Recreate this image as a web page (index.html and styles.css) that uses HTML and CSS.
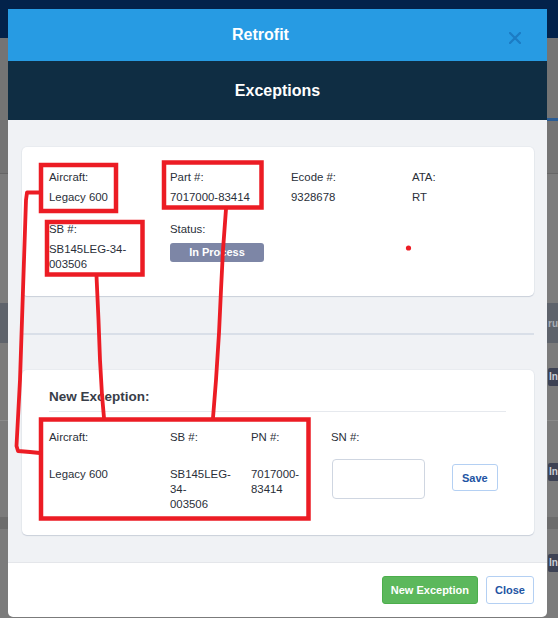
FILE: index.html
```html
<!DOCTYPE html>
<html lang="en">
<head>
<meta charset="utf-8">
<title>Retrofit - Exceptions</title>
<link rel="stylesheet" href="styles.css">
</head>
<body>
<div class="app">
  <div class="app-top"></div>
  <div class="app-band band-a"></div>
  <div class="app-tabline"><span class="tab-underline"></span></div>
  <div class="app-band band-b"></div>
  <div class="app-rule"></div>
  <div class="app-band band-c"></div>
  <div class="app-row row-head"><span class="ghost">ru</span></div>
  <div class="app-row row-1"><span class="pill">In</span></div>
  <div class="app-rule light"></div>
  <div class="app-row row-2"><span class="pill">In</span></div>
  <div class="app-band band-d"></div>
  <div class="app-row row-3"><span class="pill">In</span></div>
</div>

<div class="modal">
  <div class="modal-head">
    <h1 class="modal-title">Retrofit</h1>
    <button class="modal-close" type="button" aria-label="Close">
      <svg width="12" height="12" viewBox="0 0 12 12"><path d="M1 1 L11 11 M11 1 L1 11" stroke="#1c7cc4" stroke-width="2.2" stroke-linecap="square" fill="none"/></svg>
    </button>
  </div>
  <div class="modal-sub">Exceptions</div>
  <div class="modal-body">
    <div class="card info-card">
      <div class="field"><div class="label">Aircraft:</div><div class="value">Legacy 600</div></div>
      <div class="field"><div class="label">Part #:</div><div class="value">7017000-83414</div></div>
      <div class="field"><div class="label">Ecode #:</div><div class="value">9328678</div></div>
      <div class="field"><div class="label">ATA:</div><div class="value">RT</div></div>
      <div class="field"><div class="label">SB #:</div><div class="value">SB145LEG-34-003506</div></div>
      <div class="field"><div class="label">Status:</div><div class="badge">In Process</div></div>
    </div>
    <hr class="sep">
    <div class="card new-card">
      <h2 class="new-title">New Exception:</h2>
      <div class="new-grid">
        <div class="label">Aircraft:</div>
        <div class="label">SB #:</div>
        <div class="label">PN #:</div>
        <div class="label">SN #:</div>
        <div></div>
        <div class="value cell">Legacy 600</div>
        <div class="value cell">SB145LEG-34-003506</div>
        <div class="value cell">7017000-83414</div>
        <div><input class="sn-input" type="text"></div>
        <div><button class="btn btn-outline save-btn" type="button">Save</button></div>
      </div>
    </div>
  </div>
  <div class="modal-foot">
    <button class="btn btn-green" type="button">New Exception</button>
    <button class="btn btn-outline close-btn" type="button">Close</button>
  </div>
</div>

<svg class="marks" width="558" height="618" viewBox="0 0 558 618">
  <g fill="none" stroke="#ec1c24" stroke-width="4.5" stroke-linejoin="miter">
    <rect x="41" y="165" width="75" height="46"/>
    <rect x="164" y="162.5" width="97.5" height="45"/>
    <rect x="47" y="222" width="95.5" height="52.5"/>
    <rect x="41" y="419.5" width="267.5" height="99"/>
  </g>
  <g fill="none" stroke="#ec1c24" stroke-width="3.8" stroke-linejoin="round" stroke-linecap="round">
    <polyline points="41,192.5 27,192.5 26,200 23,290 20,380 16.5,446 18,451 30,452 40,453"/>
    <polyline points="96.5,276 98.5,320 100,360 102,395 104,418"/>
    <polyline points="226,209 223,250 221,290 219,333 216,380 213,418"/>
  </g>
  <circle cx="408.5" cy="248" r="2.6" fill="#ec1c24"/>
</svg>
</body>
</html>
```
FILE: styles.css
```css
* { box-sizing: border-box; }

html, body {
  margin: 0;
  padding: 0;
}

body {
  width: 558px;
  height: 618px;
  overflow: hidden;
  position: relative;
  background: #7b7b7b;
  font-family: "Liberation Sans", Arial, Helvetica, sans-serif;
  color: #2c313b;
}

/* ---------- background application (under the dimmed backdrop) ---------- */
.app {
  display: flex;
  flex-direction: column;
  width: 558px;
}
.app-top { height: 38px; background: #03224a; }
.app-band.band-a { height: 80px; background: #747474; }
.app-tabline {
  height: 3px;
  background: #747474;
  display: flex;
  justify-content: flex-end;
}
.tab-underline { width: 12px; background: #2a5c94; }
.app-band.band-b { height: 52px; background: #747474; }
.app-rule { height: 1px; background: #666; }
.app-rule.light { background: #8a8a8a; }
.app-band.band-c { height: 129px; background: #7c7c7c; }
.app-row {
  display: flex;
  align-items: flex-start;
  padding-left: 548px;
  font-size: 10px;
  font-weight: bold;
}
.row-head {
  height: 40px;
  background: #5e636b;
  align-items: center;
  padding-left: 548px;
}
.ghost { color: #a9aeb6; font-size: 10px; }
.row-1 { height: 77px; padding-top: 25px; }
.row-2 { height: 96px; padding-top: 42px; }
.band-d { height: 12px; background: #6c6c6c; }
.row-3 { height: 90px; padding-top: 25px; }
.pill {
  display: block;
  width: 10px;
  background: #3d4254;
  color: #c9ccd6;
  height: 18px;
  line-height: 18px;
  padding: 0 0 0 1px;
  border-radius: 2px 0 0 2px;
}

/* ---------- modal ---------- */
.modal {
  position: absolute;
  top: 9px;
  left: 8px;
  width: 539px;
  background: #fff;
  border-radius: 0 0 5px 5px;
  overflow: hidden;
}

.modal-head {
  height: 52px;
  background: #279be3;
  display: flex;
  align-items: center;
  padding: 0 15px;
}
.modal-title {
  flex: 1;
  margin: 0;
  text-align: center;
  font-size: 16px;
  font-weight: bold;
  color: #fff;
  line-height: 20px;
}
.modal-close {
  width: 34px;
  height: 34px;
  border: 0;
  background: transparent;
  padding: 0;
  margin-top: 5px;
  display: flex;
  align-items: center;
  justify-content: center;
}

.modal-sub {
  height: 59px;
  background: #0f2d43;
  color: #fff;
  font-size: 16px;
  font-weight: bold;
  display: flex;
  align-items: center;
  justify-content: center;
}

.modal-body {
  background: #f0f2f5;
  padding: 27px 13px 27px 14px;
}

.card {
  background: #fff;
  border-radius: 5px;
  box-shadow: 0 1px 1px rgba(40, 60, 100, 0.16), 0 0 0 1px rgba(40, 60, 100, 0.03);
}

.label, .value {
  font-size: 11.4px;
  line-height: 15px;
  color: #2a2f39;
}

/* info card */
.info-card {
  display: grid;
  grid-template-columns: repeat(4, 94px);
  column-gap: 27px;
  row-gap: 17px;
  padding: 23px 28px 24px 27px;
}
.field .label { margin-bottom: 5px; }
.badge {
  margin-top: 6px;
  height: 19px;
  line-height: 19px;
  width: 94px;
  border-radius: 3px;
  background: #7d86a6;
  color: #fff;
  font-size: 11px;
  font-weight: bold;
  text-align: center;
}

.sep {
  margin: 37px 0 35px;
  border: 0;
  height: 2px;
  background: #d9dfe8;
}

/* new exception card */
.new-card {
  padding: 19px 28px 23px 27px;
}
.new-title {
  margin: 0;
  font-size: 13.5px;
  line-height: 16px;
  font-weight: bold;
  color: #383d48;
  padding-bottom: 6px;
  border-bottom: 1px solid #e6e9ee;
}
.new-grid {
  margin-top: 18px;
  display: grid;
  grid-template-columns: 90px 50px 49px 90px auto;
  column-gap: 31px;
  row-gap: 14px;
  align-items: start;
}
.value.cell { padding-top: 8px; }

.sn-input {
  display: block;
  width: 93px;
  height: 40px;
  margin-left: 1px;
  border: 1px solid #cfd6e1;
  border-radius: 4px;
  background: #fff;
}

.btn {
  font-family: "Liberation Sans", Arial, Helvetica, sans-serif;
  font-size: 11px;
  font-weight: bold;
  height: 28px;
  padding: 0 9px;
  border-radius: 3px;
  cursor: pointer;
}
.btn-outline {
  background: #fff;
  border: 1px solid #b4d0f3;
  color: #2254a3;
}
.btn-green {
  background: #5cb85c;
  border: 1px solid #4cae4c;
  color: #fff;
  padding: 0 8px;
}
.close-btn { padding: 0 8px; }
.save-btn {
  margin-top: 5px;
  height: 27px;
}

.modal-foot {
  border-top: 1px solid #e4e6ea;
  padding: 13px 13px 13px;
  display: flex;
  justify-content: flex-end;
  gap: 8px;
}

/* annotation overlay */
.marks {
  position: absolute;
  top: 0;
  left: 0;
  pointer-events: none;
}
```
